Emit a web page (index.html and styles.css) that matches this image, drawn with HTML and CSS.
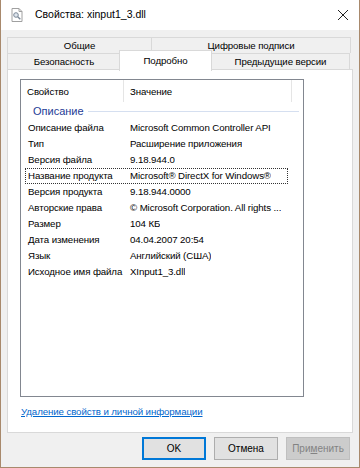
FILE: index.html
```html
<!DOCTYPE html>
<html lang="ru">
<head>
    <meta charset="UTF-8">
    <title>Свойства: xinput1_3.dll</title>
    <link rel="stylesheet" href="styles.css">
</head>
<body>
    <div class="window">
        <div class="titlebar">
            <svg class="title-icon" width="16" height="16" viewBox="0 0 16 16">
                <path d="M3 1.5h7l3 3v10H3z" fill="#fff" stroke="#a0a0a0"/>
                <path d="M10 1.5v3h3" fill="none" stroke="#a0a0a0"/>
                <circle cx="7" cy="8" r="2.3" fill="#dfe6ee" stroke="#7a8796"/>
                <path d="M8.7 9.7l2.6 2.6" stroke="#7a8796" stroke-width="1.4"/>
            </svg>
            <span class="title-text">Свойства: xinput1_3.dll</span>
            <svg class="close-icon" width="12" height="12" viewBox="0 0 12 12">
                <path d="M1 1l10 10M11 1L1 11" stroke="#222" stroke-width="1"/>
            </svg>
        </div>

        <div class="content">
            <div class="tabs">
                <div class="tab-row">
                    <div class="tab tab-general">Общие</div>
                    <div class="tab tab-sign">Цифровые подписи</div>
                </div>
                <div class="tab-row">
                    <div class="tab tab-security">Безопасность</div>
                    <div class="tab tab-active">Подробно</div>
                    <div class="tab tab-prev">Предыдущие версии</div>
                </div>
            </div>

            <div class="panel">
                <div class="listbox">
                    <div class="list-header">
                        <div class="col-name">Свойство</div>
                        <div class="col-value">Значение</div>
                        <div class="col-rest"></div>
                    </div>
                    <div class="group">
                        <span class="group-title">Описание</span>
                        <span class="group-line"></span>
                    </div>
                    <div class="row"><div class="col-name">Описание файла</div><div class="col-value">Microsoft Common Controller API</div></div>
                    <div class="row"><div class="col-name">Тип</div><div class="col-value">Расширение приложения</div></div>
                    <div class="row"><div class="col-name">Версия файла</div><div class="col-value">9.18.944.0</div></div>
                    <div class="row row-focus"><div class="col-name">Название продукта</div><div class="col-value">Microsoft® DirectX for Windows®</div></div>
                    <div class="row"><div class="col-name">Версия продукта</div><div class="col-value">9.18.944.0000</div></div>
                    <div class="row"><div class="col-name">Авторские права</div><div class="col-value">© Microsoft Corporation. All rights ...</div></div>
                    <div class="row"><div class="col-name">Размер</div><div class="col-value">104 КБ</div></div>
                    <div class="row"><div class="col-name">Дата изменения</div><div class="col-value">04.04.2007 20:54</div></div>
                    <div class="row"><div class="col-name">Язык</div><div class="col-value">Английский (США)</div></div>
                    <div class="row"><div class="col-name">Исходное имя файла</div><div class="col-value">XInput1_3.dll</div></div>
                </div>
                <a class="remove-link" href="#">Удаление свойств и личной информации</a>
            </div>

            <div class="buttons">
                <button class="btn btn-default">OK</button>
                <button class="btn">Отмена</button>
                <button class="btn" disabled>При<u>м</u>енить</button>
            </div>
        </div>
    </div>
</body>
</html>
```

FILE: styles.css
```css
body {
    margin: 0;
    padding: 0;
    font-family: "Liberation Sans", Arial, sans-serif;
    font-size: 9.7px;
    letter-spacing: -0.1px;
    color: #000;
    background: #fff;
}

.window {
    width: 360px;
    height: 468px;
    box-sizing: border-box;
    border: 1px solid #a8896c;
    border-top: none;
    display: flex;
    flex-direction: column;
    overflow: hidden;
}

.titlebar {
    height: 30px;
    flex: none;
    background: #fff;
    display: flex;
    align-items: center;
    padding: 0 10px 0 8px;
}

.title-icon {
    margin-right: 10px;
}

.title-text {
    flex: 1;
    font-size: 10.5px;
    letter-spacing: 0;
    padding-bottom: 2px;
}

.close-icon {
    margin-bottom: 1px;
}

.content {
    flex: 1;
    background: #f0f0f0;
    padding: 7px 6px 0 6px;
    display: flex;
    flex-direction: column;
}

/* tabs */
.tabs {
    display: flex;
    flex-direction: column;
}

.tab-row {
    display: flex;
    height: 16px;
}

.tab-row + .tab-row {
    height: 17px;
    margin-top: -1px;
}

.tab {
    box-sizing: border-box;
    border: 1px solid #d9d9d9;
    border-bottom: none;
    background: #f0f0f0;
    text-align: center;
    line-height: 15px;
    margin-right: -1px;
}

.tab-general {
    width: 145px;
}

.tab-sign {
    width: 200px;
}

.tab-security {
    width: 114px;
    margin-top: 1px;
    line-height: 16px;
}

.tab-active {
    width: 93px;
    background: #fff;
    height: 21px;
    margin-top: -2px;
    position: relative;
    z-index: 1;
    line-height: 19px;
    margin-left: -1px;
}

.tab-prev {
    width: 139px;
    margin-top: 1px;
    line-height: 16px;
}

.panel {
    width: 346px;
    height: 364px;
    box-sizing: border-box;
    background: #fff;
    border: 1px solid #d9d9d9;
    padding: 9px 0 0 12px;
}

.listbox {
    width: 284px;
    height: 318px;
    box-sizing: border-box;
    border: 1px solid #828790;
    background: #fff;
}

.list-header {
    display: flex;
    height: 22px;
    align-items: stretch;
}

.list-header > div {
    display: flex;
    align-items: center;
}

.list-header .col-name {
    border-right: 1px solid #e5e5e5;
}

.list-header .col-value {
    width: 161px;
    flex: none;
    border-right: 1px solid #e5e5e5;
}

.col-name {
    width: 103px;
    flex: none;
    box-sizing: border-box;
    padding-left: 6px;
    white-space: nowrap;
}

.col-value {
    padding-left: 6px;
    white-space: nowrap;
    overflow: hidden;
}

.group {
    display: flex;
    align-items: center;
    height: 18px;
    padding-left: 12px;
}

.group-title {
    color: #1e3c96;
    font-size: 11px;
    letter-spacing: 0;
    margin-right: 4px;
}

.group-line {
    flex: 1;
    height: 1px;
    background: #d5dff0;
    margin-right: 4px;
}

.row {
    display: flex;
    height: 16px;
    line-height: 16px;
    box-sizing: border-box;
    margin-left: 4px;
    width: 263px;
}

.row .col-name {
    width: 99px;
    padding-left: 3px;
}

.row-focus {
    border: 1px dotted #333;
    line-height: 14px;
}

.row-focus .col-name {
    padding-left: 2px;
}

.row-focus .col-value {
    padding-left: 5px;
}

.row:first-of-type {
    margin-top: 1px;
}

.remove-link {
    display: inline-block;
    margin-top: 9px;
    margin-left: 1px;
    color: #0066cc;
    text-decoration: underline;
}

/* bottom buttons */
.buttons {
    display: flex;
    justify-content: flex-end;
    gap: 8px;
    padding: 4px 3px 0 0;
}

.btn {
    width: 64px;
    height: 23px;
    box-sizing: border-box;
    font-family: inherit;
    font-size: 10px;
    background: #e1e1e1;
    border: 1px solid #adadad;
    color: #000;
    padding: 0;
}

.btn-default {
    border: 2px solid #0078d7;
}

.btn:disabled {
    background: #cccccc;
    border-color: #bfbfbf;
    color: #838383;
}
```
